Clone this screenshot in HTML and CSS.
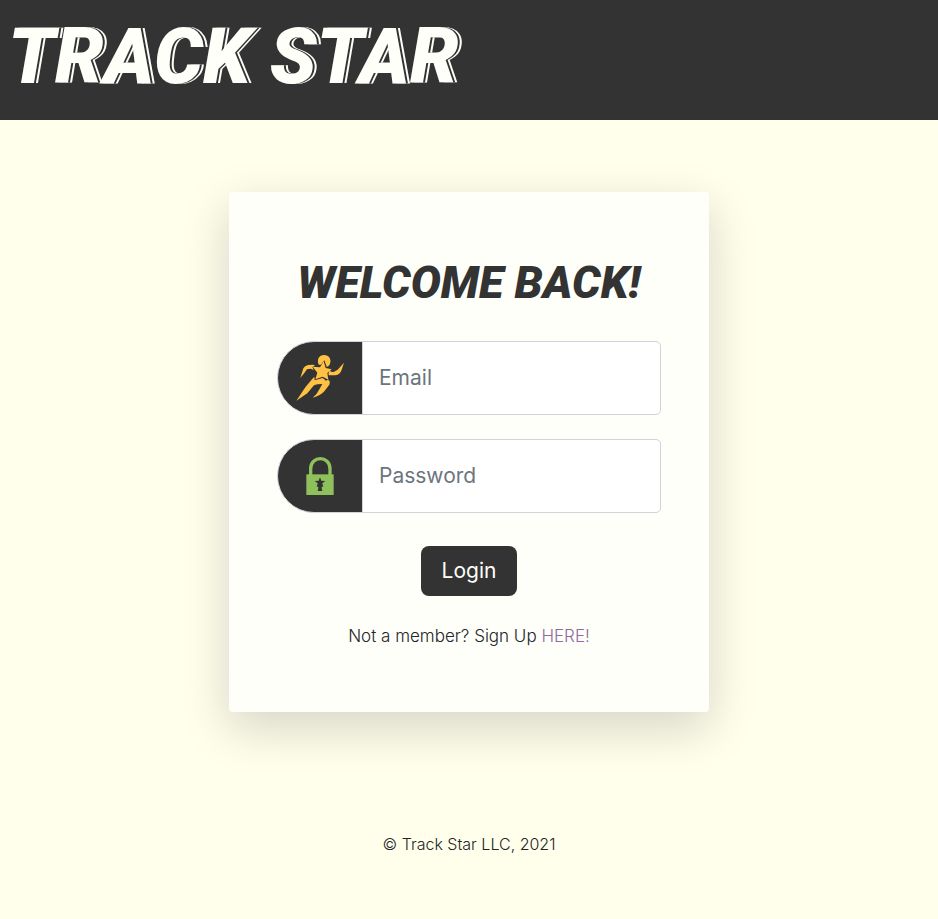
FILE: index.html
```html
<!DOCTYPE html>
<html lang="en">
<head>
  <meta charset="utf-8">
  <meta name="viewport" content="width=device-width, initial-scale=1">
  <title>Track Star</title>
  <link rel="stylesheet" href="styles.css">
</head>
<body>
  <header class="site-header">
    <h1 class="brand">TRACK STAR</h1>
  </header>
  <main class="content">
    <form class="card">
      <h2 class="card-title">WELCOME BACK!</h2>
      <div class="field">
        <label class="field-icon" for="email" aria-label="Email">
          <svg viewBox="0 0 180 180" fill="#ffc145" aria-hidden="true">
            <path d="M86 50C80 34 87 21 102 21C117 21 125 34 120 47C118 53 114 56 110 56L103 37L93 50Z"/>
            <path d="M101 40L107 60L125 64L112 75L115 95L98 86L76 94L82 74L68 56L90 58Z"/>
            <path d="M75 53L70 50L54 51Q44 53 40 61L31 90L43 75L51 64L62 62L71 66L67 57Z"/>
            <path d="M119 67Q123 74 132 71L143 65L162 44L155 65Q151 79 136 82L117 82L115 78Z"/>
            <path d="M73 86L74 97L98 90L108 98L114 95Q122 98 118 110L103 130Q92 143 68 149Q82 138 88 124L97 108L82 109L72 112L52 136L19 158L46 118L66 94Z"/>
          </svg>
        </label>
        <input class="field-input" id="email" type="email" placeholder="Email">
      </div>
      <div class="field">
        <label class="field-icon" for="password" aria-label="Password">
          <svg viewBox="0 0 180 180" aria-hidden="true">
            <path d="M62 88V68C62 28 120 28 120 68V88" fill="none" stroke="#8fc05c" stroke-width="10"/>
            <path d="M49 85H131V147H49Z" fill="#8fc05c"/>
            <path d="M90 94L94 104L106 105L97 112L100 122H95V126L97 135H83L85 126V122H80L83 112L74 105L86 104Z" fill="#333"/>
          </svg>
        </label>
        <input class="field-input" id="password" type="password" placeholder="Password">
      </div>
      <button class="login" type="submit">Login</button>
      <p class="signup">Not a member? Sign Up <a href="#signup">HERE!</a></p>
    </form>
  </main>
  <footer class="site-footer">© Track Star LLC, 2021</footer>
</body>
</html>
```
FILE: styles.css
```css
* {
  box-sizing: border-box;
}

body {
  margin: 0;
  background: #ffffeb;
  color: #212529;
  font: 300 17px/24px Inter, "Open Sans", sans-serif;
}

.site-header {
  min-height: 120px;
  padding: 12px 8px;
  background: #333;
}

.brand {
  margin: 0;
  color: #fffffa;
  font: italic 900 77px/90px Roboto, sans-serif;
  text-shadow: 2px 0 #333, 4px 0 #fffffa;
}

.content {
  padding: 72px 16px;
}

.card {
  display: flex;
  flex-direction: column;
  align-items: center;
  max-width: 480px;
  margin: 0 auto;
  padding: 64px 48px;
  border-radius: 4px;
  background: #fffffa;
  box-shadow: 0 16px 48px rgba(30, 10, 40, 0.175);
}

.card-title {
  margin: 0 0 32px;
  color: #333;
  font: italic 900 45px/53px Roboto, sans-serif;
  white-space: nowrap;
}

.field {
  display: flex;
  width: 100%;
  height: 74px;
  margin-bottom: 24px;
}

.field-icon {
  display: flex;
  flex: none;
  align-items: center;
  justify-content: center;
  width: 86px;
  border: 1px solid #ced4da;
  border-radius: 37px 0 0 37px;
  background: #333;
}

.field-icon svg {
  width: 60px;
  height: 60px;
}

.field-input {
  flex: 1;
  min-width: 0;
  margin-left: -1px;
  padding: 8px 16px;
  border: 1px solid #ced4da;
  border-radius: 0 5px 5px 0;
  background: #fff;
  color: #495057;
  font: 400 21px/30px Inter, sans-serif;
}

.field-input::placeholder {
  color: #6c757d;
  opacity: 1;
}

.login {
  margin: 9px 0 28px;
  padding: 10px 21px;
  border: 0;
  border-radius: 8px;
  background: #333;
  color: #fffffa;
  font: 400 21px/30px Inter, sans-serif;
}

.signup {
  margin: 0;
}

.signup a {
  color: #8d6a9f;
  text-decoration: none;
}

.site-footer {
  padding: 48px 16px;
  font-size: 16px;
  text-align: center;
}
```
